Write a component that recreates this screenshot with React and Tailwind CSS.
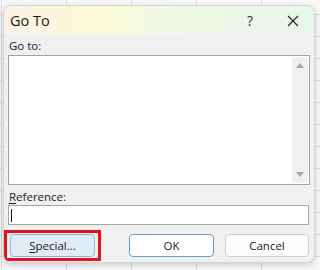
import React from "react";

export default function App() {
  const font = { fontFamily: '"Open Sans", "Noto Sans", Arial, sans-serif' };
  return (
    <div
      className="w-[320px] h-[270px] overflow-hidden bg-[#f8f8f8] bg-[linear-gradient(#dcdcdc_1px,transparent_1px),linear-gradient(90deg,#dcdcdc_1px,transparent_1px)] bg-[size:65px_22px] bg-[position:1px_14px]"
      style={font}
    >
      <div className="pl-[3px] pt-[5px]">
        <div className="w-[312px] h-[258px] bg-[#f0f0f0] rounded-[8px] border border-[#d4d4d4] shadow-[0_2px_6px_rgba(0,0,0,0.18)] overflow-hidden flex flex-col">
          {/* title bar */}
          <div className="h-[28px] shrink-0 flex items-center bg-[linear-gradient(90deg,#fbf2e6_0%,#fbf5dc_18%,#f9f9d2_32%,#f1f8e6_48%,#ebf7e6_75%,#e6f7e8_100%)]">
            <span className="ml-[6px] mt-[2px] text-[14.5px] text-[#1a1a1a] leading-none">Go To</span>
            <span className="ml-auto mr-[34px] mt-[2px] text-[14px] text-[#333] leading-none">?</span>
            <svg width="12" height="12" viewBox="0 0 12 12" className="mr-[15px] mt-[2px]">
              <path d="M1 1L11 11M11 1L1 11" stroke="#222" strokeWidth="1.1" />
            </svg>
          </div>

          {/* body */}
          <div className="flex-1 flex flex-col px-[4px]">
            <div className="mt-[5px] ml-[1px] text-[11.5px] text-[#1a1a1a] leading-[14px]">Go to:</div>
            <div className="mt-[2px] h-[130px] w-[302px] bg-white border border-[#a0a0a0] flex justify-end">
              <div className="w-[16px] my-[1px] mr-[1px] bg-[#f0f0f0] flex flex-col items-center justify-between py-[6px]">
                <svg width="8" height="5" viewBox="0 0 8 5"><path d="M0 5L4 0L8 5Z" fill="#a8a8a8" /></svg>
                <svg width="8" height="5" viewBox="0 0 8 5"><path d="M0 0L4 5L8 0Z" fill="#a8a8a8" /></svg>
              </div>
            </div>

            <div className="mt-[5px] ml-[1px] text-[11.5px] text-[#1a1a1a] leading-[14px]">
              <span className="underline underline-offset-2">R</span>eference:
            </div>
            <div className="mt-[1px] h-[20px] w-[301px] bg-white border border-[#a6a6a6] flex items-center">
              <div className="ml-[2px] w-px h-[13px] bg-[#111]" />
            </div>

            <div className="mt-[5px] flex items-center">
              <div className="border-[3px] border-[#e3121e] px-[3px] py-[1px] -ml-[4px]">
                <div className="w-[85px] h-[23px] rounded-[4px] bg-[#e1ecf7] border border-[#8fb4dd] flex items-center justify-center text-[11.5px] text-[#1a1a1a]">
                  <span><span className="underline underline-offset-2">S</span>pecial...</span>
                </div>
              </div>
              <div className="ml-[28px] w-[85px] h-[23px] rounded-[4px] bg-white border border-[#6b9bd1] flex items-center justify-center text-[11.5px] text-[#1a1a1a]">
                OK
              </div>
              <div className="ml-[11px] w-[84px] h-[23px] rounded-[4px] bg-[#fdfdfd] border border-[#cfcfcf] flex items-center justify-center text-[11.5px] text-[#1a1a1a]">
                Cancel
              </div>
            </div>
          </div>
        </div>
      </div>
    </div>
  );
}
